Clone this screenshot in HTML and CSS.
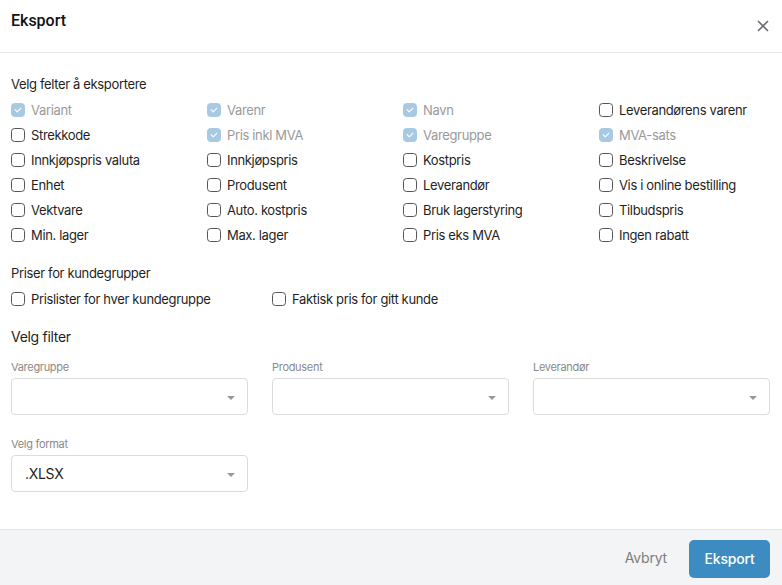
FILE: index.html
```html
<!DOCTYPE html>
<html lang="no">
<head>
<meta charset="utf-8">
<title>Eksport</title>
<link rel="stylesheet" href="styles.css">
</head>
<body>
<div class="modal">
  <header class="header">
    <h1 class="title">Eksport</h1>
    <button class="close" aria-label="Lukk">
      <svg width="12" height="12" viewBox="0 0 12 12"><path d="M1 1L11 11M11 1L1 11" stroke="#6b6e73" stroke-width="1.6" fill="none"/></svg>
    </button>
  </header>
  <main class="content">
    <div class="section-title">Velg felter å eksportere</div>
    <div class="grid4">
      <label class="cb disabled"><span class="box checked"></span>Variant</label>
      <label class="cb disabled"><span class="box checked"></span>Varenr</label>
      <label class="cb disabled"><span class="box checked"></span>Navn</label>
      <label class="cb"><span class="box"></span>Leverandørens varenr</label>
      <label class="cb"><span class="box"></span>Strekkode</label>
      <label class="cb disabled"><span class="box checked"></span>Pris inkl MVA</label>
      <label class="cb disabled"><span class="box checked"></span>Varegruppe</label>
      <label class="cb disabled"><span class="box checked"></span>MVA-sats</label>
      <label class="cb"><span class="box"></span>Innkjøpspris valuta</label>
      <label class="cb"><span class="box"></span>Innkjøpspris</label>
      <label class="cb"><span class="box"></span>Kostpris</label>
      <label class="cb"><span class="box"></span>Beskrivelse</label>
      <label class="cb"><span class="box"></span>Enhet</label>
      <label class="cb"><span class="box"></span>Produsent</label>
      <label class="cb"><span class="box"></span>Leverandør</label>
      <label class="cb"><span class="box"></span>Vis i online bestilling</label>
      <label class="cb"><span class="box"></span>Vektvare</label>
      <label class="cb"><span class="box"></span>Auto. kostpris</label>
      <label class="cb"><span class="box"></span>Bruk lagerstyring</label>
      <label class="cb"><span class="box"></span>Tilbudspris</label>
      <label class="cb"><span class="box"></span>Min. lager</label>
      <label class="cb"><span class="box"></span>Max. lager</label>
      <label class="cb"><span class="box"></span>Pris eks MVA</label>
      <label class="cb"><span class="box"></span>Ingen rabatt</label>
    </div>

    <div class="section-title prices">Priser for kundegrupper</div>
    <div class="grid3">
      <label class="cb"><span class="box"></span>Prislister for hver kundegruppe</label>
      <label class="cb"><span class="box"></span>Faktisk pris for gitt kunde</label>
    </div>

    <div class="filter-title">Velg filter</div>
    <div class="grid3 fields">
      <div class="field">
        <div class="field-label">Varegruppe</div>
        <div class="select"><span class="value"></span><span class="arrow"></span></div>
      </div>
      <div class="field">
        <div class="field-label">Produsent</div>
        <div class="select"><span class="value"></span><span class="arrow"></span></div>
      </div>
      <div class="field">
        <div class="field-label">Leverandør</div>
        <div class="select"><span class="value"></span><span class="arrow"></span></div>
      </div>
    </div>
    <div class="grid3 fields format">
      <div class="field">
        <div class="field-label">Velg format</div>
        <div class="select"><span class="value">.XLSX</span><span class="arrow"></span></div>
      </div>
    </div>
  </main>
  <footer class="footer">
    <button class="btn-cancel">Avbryt</button>
    <button class="btn-primary">Eksport</button>
  </footer>
</div>
</body>
</html>
```

FILE: styles.css
```css
* { box-sizing: border-box; }
html, body { margin: 0; padding: 0; }
body {
  width: 782px;
  height: 585px;
  background: #fff;
  font-family: Inter, "Noto Sans", sans-serif;
  color: #1f1f1f;
  overflow: hidden;
}
.modal {
  display: flex;
  flex-direction: column;
  height: 585px;
}
.header {
  height: 53px;
  border-bottom: 1px solid #e6e6e6;
  display: flex;
  align-items: flex-start;
  justify-content: space-between;
  padding: 11px 12px 0 11px;
}
.title {
  margin: 0;
  font-family: Roboto, "Liberation Sans", sans-serif;
  font-weight: 500;
  font-size: 16px;
  line-height: 20px;
  color: #111;
}
.close {
  border: 0;
  background: none;
  padding: 0;
  margin-top: 8px;
  width: 14px;
  height: 14px;
  display: flex;
  align-items: center;
  justify-content: center;
}
.content {
  flex: 1;
  padding: 23px 11px 0 11px;
}
.section-title {
  font-size: 13px;
  line-height: 16px;
  letter-spacing: -0.35px;
  color: #1f1f1f;
}
.grid4 {
  display: grid;
  grid-template-columns: repeat(4, 196px);
  grid-auto-rows: 25px;
  margin-top: 5px;
}
.cb {
  display: flex;
  align-items: center;
  gap: 6px;
  font-size: 13px;
  letter-spacing: -0.35px;
  color: #1f1f1f;
  white-space: nowrap;
}
.cb.disabled { color: #9a9a9a; }
.box {
  width: 14px;
  height: 14px;
  border: 1px solid #555;
  border-radius: 3.5px;
  flex: none;
  position: relative;
  background: #fff;
}
.box.checked {
  background: #a7cae2;
  border-color: #a7cae2;
}
.box.checked::after {
  content: "";
  position: absolute;
  left: 4px;
  top: 2.5px;
  width: 3px;
  height: 5px;
  border-right: 1.5px solid #fff;
  border-bottom: 1.5px solid #fff;
  transform: rotate(45deg);
}
.prices { margin-top: 18px; }
.grid3 {
  display: grid;
  grid-template-columns: repeat(3, 237px);
  column-gap: 24px;
  grid-auto-rows: 25px;
  margin-top: 5px;
}
.filter-title {
  margin-top: 17px;
  font-size: 14px;
  line-height: 18px;
  letter-spacing: -0.3px;
}
.grid3.fields {
  grid-auto-rows: auto;
  margin-top: 14px;
}
.grid3.format { margin-top: 22px; }
.field-label {
  font-size: 11px;
  line-height: 14px;
  letter-spacing: -0.3px;
  color: #8a8a8a;
}
.select {
  margin-top: 4px;
  height: 37px;
  border: 1px solid #dcdcdc;
  border-radius: 4px;
  display: flex;
  align-items: center;
  justify-content: space-between;
  padding: 0 12px 0 13px;
  font-size: 14px;
  letter-spacing: -0.3px;
  color: #1f1f1f;
}
.arrow {
  width: 0;
  height: 0;
  border-left: 4.5px solid transparent;
  border-right: 4.5px solid transparent;
  border-top: 4.5px solid #999;
  margin-top: 2px;
}
.footer {
  height: 56px;
  background: #f3f4f6;
  border-top: 1px solid #e3e4e6;
  display: flex;
  align-items: center;
  justify-content: flex-end;
  padding: 0 12px 0 0;
  gap: 22px;
}
.btn-cancel {
  border: 0;
  background: none;
  font-family: Inter, "Noto Sans", sans-serif;
  font-size: 14px;
  letter-spacing: -0.2px;
  color: #7d7d7d;
  padding: 0;
}
.btn-primary {
  border: 0;
  width: 81px;
  height: 38px;
  border-radius: 5px;
  background: #3d8cc1;
  color: #fff;
  font-family: Inter, "Noto Sans", sans-serif;
  font-size: 14px;
  font-weight: 500;
  letter-spacing: -0.2px;
  margin-top: 2px;
}
```
